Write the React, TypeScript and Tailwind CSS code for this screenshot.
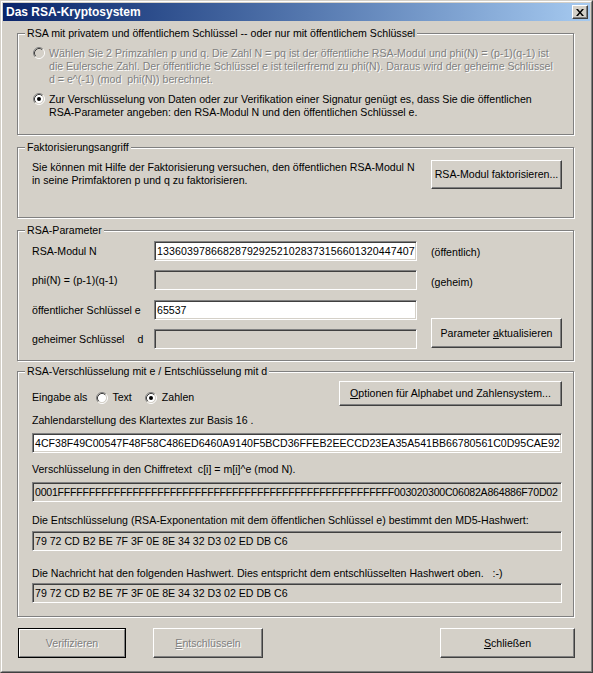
import React from 'react'

const font = "font-['Liberation_Sans',Arial,sans-serif]"
const off = 'text-[#808080] [text-shadow:1px_1px_0_#fff]'

function Radio({ checked, disabled }: { checked?: boolean; disabled?: boolean }) {
  return (
    <svg width="12" height="12" viewBox="0 0 12 12" className="shrink-0">
      <circle cx="6" cy="6" r="4.2" fill={disabled ? '#d4d0c8' : '#fff'} />
      <path d="M2.11 9.89A5.5 5.5 0 0 1 9.89 2.11" stroke="#808080" fill="none" />
      <path d="M9.89 2.11A5.5 5.5 0 0 1 2.11 9.89" stroke="#fff" fill="none" />
      <path d="M2.82 9.18A4.5 4.5 0 0 1 9.18 2.82" stroke="#404040" fill="none" />
      <path d="M9.18 2.82A4.5 4.5 0 0 1 2.82 9.18" stroke="#d4d0c8" fill="none" />
      {checked && <circle cx="6" cy="6" r="2" fill={disabled ? '#808080' : '#000'} />}
    </svg>
  )
}

function Btn({
  className,
  children,
  disabled,
  isDefault,
}: {
  className: string
  children: React.ReactNode
  disabled?: boolean
  isDefault?: boolean
}) {
  const edge = isDefault
    ? 'border border-t-white border-l-white border-r-[#808080] border-b-[#808080] ring-1 ring-black'
    : 'border border-t-white border-l-white border-r-[#404040] border-b-[#404040] shadow-[inset_-1px_-1px_0_#808080]'
  return (
    <div className={`flex items-center justify-center bg-[#d4d0c8] whitespace-nowrap ${edge} ${disabled ? off : ''} ${className}`}>
      {children}
    </div>
  )
}

function Field({ text, disabled, className }: { text?: string; disabled?: boolean; className: string }) {
  return (
    <div
      className={`h-[20px] border border-t-[#808080] border-l-[#808080] border-r-white border-b-white shadow-[inset_1px_1px_0_#404040,inset_-1px_-1px_0_#d4d0c8] overflow-hidden whitespace-nowrap leading-[18px] pl-[2px] ${
        disabled ? 'bg-[#d4d0c8]' : 'bg-white'
      } ${className}`}
    >
      {text}
    </div>
  )
}

function Group({ title, className, children }: { title: string; className: string; children: React.ReactNode }) {
  return (
    <fieldset className={`ml-[14px] w-[557px] min-w-0 border border-[#808080] shadow-[inset_1px_1px_0_#fff,1px_1px_0_#fff] ${className}`}>
      <legend className="ml-[7px] px-[2px] leading-[13px] bg-[#d4d0c8]">{title}</legend>
      {children}
    </fieldset>
  )
}

// PKCS#1-Block, so weit er im Feld sichtbar ist
const cipher = '0001' + 'F'.repeat(54) + '003020300C06082A864886F70D02'
const hash = '79 72 CD B2 BE 7F 3F 0E 8E 34 32 D3 02 ED DB C6'

export default function App() {
  return (
    <div
      className={`w-[593px] h-[673px] border border-t-[#d4d0c8] border-l-[#d4d0c8] border-r-[#404040] border-b-[#404040] ${font} text-[10.6px] leading-[13px] text-black select-none`}
    >
      <div className="h-full flex flex-col border border-t-white border-l-white border-r-[#808080] border-b-[#808080] bg-[#d4d0c8] p-[1px]">
        <div className="h-[18px] shrink-0 flex items-center bg-linear-to-r from-[#0a246a] to-[#a6caf0] pl-[3px] pr-[2px]">
          <span className="text-white font-bold text-[12px] leading-[14px]">Das RSA-Kryptosystem</span>
          <div className="ml-auto w-[16px] h-[14px] bg-[#d4d0c8] border border-t-white border-l-white border-r-[#404040] border-b-[#404040] shadow-[inset_-1px_-1px_0_#808080] flex items-center justify-center">
            <svg width="8" height="7" viewBox="0 0 8 7">
              <path d="M0 0h2l2 2.4L6 0h2L5 3.5 8 7H6L4 4.6 2 7H0l3-3.5z" fill="#000" />
            </svg>
          </div>
        </div>

        <Group title="RSA mit privatem und öffentlichem Schlüssel -- oder nur mit öffentlichem Schlüssel" className="mt-[6px] h-[108px] shrink-0">
          <div className="pt-[7px] pl-[15px]">
            <div className="flex items-start gap-[4px]">
              <Radio disabled />
              <div className={`whitespace-nowrap ${off}`}>
                Wählen Sie 2 Primzahlen p und q. Die Zahl N = pq ist der öffentliche RSA-Modul und phi(N) = (p-1)(q-1) ist
                <br />
                die Eulersche Zahl. Der öffentliche Schlüssel e ist teilerfremd zu phi(N). Daraus wird der geheime Schlüssel
                <br />
                <span className="whitespace-pre">d = e^(-1) (mod  phi(N)) berechnet.</span>
              </div>
            </div>
            <div className="flex items-start gap-[4px] mt-[7px]">
              <Radio checked />
              <div className="whitespace-nowrap">
                Zur Verschlüsselung von Daten oder zur Verifikation einer Signatur genügt es, dass Sie die öffentlichen
                <br />
                RSA-Parameter angeben: den RSA-Modul N und den öffentlichen Schlüssel e.
              </div>
            </div>
          </div>
        </Group>

        <Group title="Faktorisierungsangriff" className="mt-[6px] h-[77px] shrink-0">
          <div className="flex items-start pt-[6px] pl-[14px] pr-[11px]">
            <div className="flex-1 mt-[1px] whitespace-nowrap">
              Sie können mit Hilfe der Faktorisierung versuchen, den öffentlichen RSA-Modul N
              <br />
              in seine Primfaktoren p und q zu faktorisieren.
            </div>
            <Btn className="w-[131px] h-[29px]">RSA-Modul faktorisieren...</Btn>
          </div>
        </Group>

        <Group title="RSA-Parameter" className="mt-[6px] h-[137px] shrink-0">
          <div className="grid grid-cols-[122px_263px_1fr] grid-rows-[20px_29px_30px_29px] pt-[4px] pl-[14px] pr-[11px]">
            <div className="self-center">RSA-Modul N</div>
            <Field text="1336039786682879292521028373156601320447407" className="self-end tracking-[0.1px]" />
            <div className="self-center pl-[14px] mt-[2px]">(öffentlich)</div>

            <div className="self-end h-[20px] flex items-center">phi(N) = (p-1)(q-1)</div>
            <Field disabled className="self-end" />
            <div className="self-end h-[20px] flex items-center pl-[14px] pt-[4px]">(geheim)</div>

            <div className="self-end h-[20px] flex items-center">öffentlicher Schlüssel e</div>
            <Field text="65537" className="self-end" />
            <div className="row-span-2 self-end pl-[14px] mb-[1px]">
              <Btn className="w-[131px] h-[30px]">
                Parameter&nbsp;<u>a</u>ktualisieren
              </Btn>
            </div>

            <div className="self-end h-[20px] flex items-center">
              geheimer Schlüssel<span className="ml-[13px]">d</span>
            </div>
            <Field disabled className="self-end" />
          </div>
        </Group>

        <Group title="RSA-Verschlüsselung mit e / Entschlüsselung mit d" className="mt-[4px] h-[252px] shrink-0">
          <div className="pt-[3px] pl-[14px] pr-[11px]">
            <div className="flex items-end justify-between">
              <div className="flex items-center mb-[2px]">
                <span>Eingabe als</span>
                <span className="ml-[9px]">
                  <Radio />
                </span>
                <span className="ml-[4px]">Text</span>
                <span className="ml-[13px]">
                  <Radio checked />
                </span>
                <span className="ml-[5px]">Zahlen</span>
              </div>
              <Btn className="w-[223px] h-[25px]">
                <u>O</u>ptionen für Alphabet und Zahlensystem...
              </Btn>
            </div>
            <div className="mt-[8px]">Zahlendarstellung des Klartextes zur Basis 16 .</div>
            <Field
              text="4CF38F49C00547F48F58C486ED6460A9140F5BCD36FFEB2EECCD23EA35A541BB66780561C0D95CAE92"
              className="mt-[6px] w-[530px]"
            />
            <div className="mt-[10px] whitespace-pre">Verschlüsselung in den Chiffretext  c[i] = m[i]^e (mod N).</div>
            <Field text={cipher} disabled className="mt-[6px] w-[530px] tracking-[-0.24px]" />
            <div className="mt-[12px]">Die Entschlüsselung (RSA-Exponentation mit dem öffentlichen Schlüssel e) bestimmt den MD5-Hashwert:</div>
            <Field text={hash} disabled className="mt-[4px] w-[530px]" />
            <div className="mt-[16px] whitespace-pre">
              Die Nachricht hat den folgenden Hashwert. Dies entspricht dem entschlüsselten Hashwert oben.   :-)
            </div>
            <Field text={hash} disabled className="mt-[3px] w-[530px]" />
          </div>
        </Group>

        <div className="flex items-start mt-[11px]">
          <Btn isDefault disabled className="ml-[16px] mt-[1px] w-[106px] h-[28px]">
            Verifizieren
          </Btn>
          <Btn disabled className="ml-[28px] w-[110px] h-[30px]">
            <u>E</u>ntschlüsseln
          </Btn>
          <Btn className="ml-auto mr-[15px] w-[135px] h-[30px]">
            <u>S</u>chließen
          </Btn>
        </div>
      </div>
    </div>
  )
}
